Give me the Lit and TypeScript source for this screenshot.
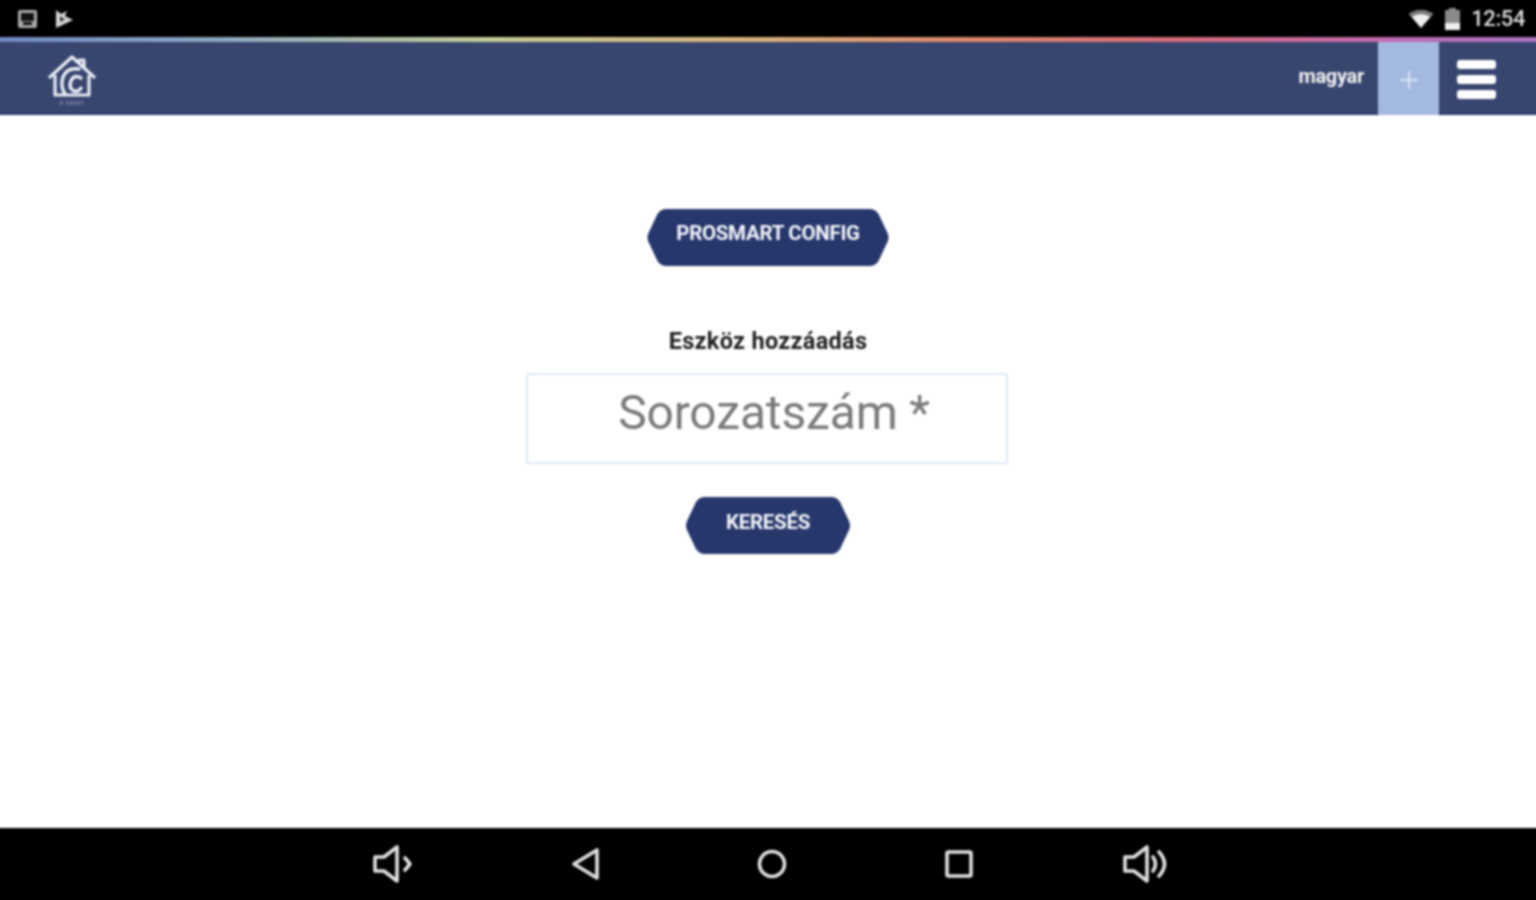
import { LitElement, html, css } from "lit";
import { customElement } from "lit/decorators.js";

@customElement("app-root")
export class AppRoot extends LitElement {
  static styles = css`
    :host { display: block; width: 1536px; height: 900px; overflow: hidden; background: #fff; font-family: "Roboto", "Liberation Sans", sans-serif; }
    .page { display: flex; flex-direction: column; width: 1552px; height: 916px; margin: -8px; filter: blur(0.85px); }
    svg { display: block; flex: none; }
    .status { height: 45px; box-sizing: border-box; background: #000; display: flex; align-items: center; padding: 8px 19px 0 25px; color: #dcdcdc; flex: none; }
    .status .left { display: flex; gap: 17px; align-items: center; }
    .status .right { margin-left: auto; display: flex; align-items: center; gap: 10px; }
    .time { font-size: 22px; font-weight: 500; letter-spacing: -0.4px; }
    .rainbow { height: 5px; flex: none; background: linear-gradient(90deg, #6f86c4 0%, #8ea8c0 15%, #c4cc96 32%, #d6b47e 48%, #dc8a6a 62%, #d56a78 76%, #c06ab0 90%, #a873c4 100%); }
    .header { height: 73px; background: #38466f; border-bottom: 2px solid #2b3a6b; box-sizing: border-box; display: flex; align-items: center; padding-left: 56px; flex: none; }
    .lang { margin-left: auto; margin-right: 14px; color: #f2f2f2; font-size: 20px; font-weight: 700; letter-spacing: -0.3px; position: relative; top: -2px; }
    .add { width: 61px; height: 73px; background: #a4b9e0; display: flex; align-items: center; justify-content: center; align-self: flex-start; }
    .menu { width: 105px; display: flex; flex-direction: column; gap: 6px; padding: 3px 0 0 18px; box-sizing: border-box; }
    .menu span { display: block; width: 39px; height: 9px; background: #fff; border-radius: 3px; }
    .main { flex: 1; display: flex; flex-direction: column; align-items: center; padding-top: 94px; background: #fff; }
    .btn { border: 0; background: #27376c; color: #f4f6fb; font-family: inherit; font-weight: 700; font-size: 20.5px; letter-spacing: -0.3px; height: 57px; padding: 0 0 10px; box-sizing: border-box; display: flex; align-items: center; justify-content: center; }
    .b1 { width: 243px; clip-path: path("M20 0 H223 Q229 0 232 5 L241 24 Q243 28.5 241 33 L232 52 Q229 57 223 57 H20 Q14 57 11 52 L2 33 Q0 28.5 2 24 L11 5 Q14 0 20 0 Z"); }
    .b2 { width: 166px; padding-bottom: 8px; clip-path: path("M20 0 H146 Q152 0 155 5 L164 24 Q166 28.5 164 33 L155 52 Q152 57 146 57 H20 Q14 57 11 52 L2 33 Q0 28.5 2 24 L11 5 Q14 0 20 0 Z"); }
    h2 { margin: 60px 0 0; font-size: 23.5px; line-height: 30px; font-weight: 700; color: #222; letter-spacing: 0.3px; }
    .field { width: 482px; height: 91px; margin: 17px 2px 33px 0; box-sizing: border-box; border: 2px solid #dfe7f6; border-radius: 2px; display: flex; justify-content: center; padding: 8px 0 0 14px; font-size: 48px; line-height: 60px; font-weight: 400; letter-spacing: -0.15px; color: #7a7a7a; background: #fff; }
    .nav { height: 80px; box-sizing: border-box; background: #000; flex: none; display: flex; align-items: center; padding: 0 0 8px 380px; }
    .nav svg { fill: none; stroke: #e0e0e0; stroke-width: 3.6; stroke-linejoin: round; stroke-linecap: round; }
    .g1 { margin-right: 157px; }
    .g2 { margin-right: 157px; }
    .g3 { margin-right: 158px; }
    .g4 { margin-right: 149px; }
  `;

  render() {
    return html`<div class="page">
      <div class="status">
        <div class="left">
          <svg width="21" height="20" viewBox="0 0 21 20"><rect x="1" y="1" width="19" height="18" rx="2" fill="#a8a8a8"/><rect x="4" y="4" width="13" height="8" fill="#111"/><rect x="6" y="13" width="9" height="3" fill="#111"/></svg>
          <svg width="19" height="20" viewBox="0 0 19 20"><path d="M1 1 L6 5 L12 2 L10 7 L18 11 L1 19Z" fill="#d4d4d4"/><path d="M5 7 L10 10.5 L5 13Z" fill="#333"/></svg>
        </div>
        <div class="right">
          <svg width="26" height="20" viewBox="0 0 26 20"><path d="M1 5 Q13 -3 25 5 L13 19Z" fill="#f0f0f0"/><path d="M1 5 Q13 -3 25 5 L22.5 8 Q13 2 3.5 8Z" fill="#777"/></svg>
          <svg width="17" height="22" viewBox="0 0 17 22"><rect x="5" y="0" width="7" height="3" fill="#8a8a8a"/><rect x="1" y="2" width="15" height="13" fill="#8a8a8a"/><rect x="1" y="15" width="15" height="7" fill="#f0f0f0"/></svg>
          <span class="time">12:54</span>
        </div>
      </div>
      <div class="rainbow"></div>
      <div class="header">
        <svg width="48" height="54" viewBox="0 0 48 54" style="margin-top:6px">
          <g fill="none" stroke="#e8ecf4" stroke-linejoin="round" stroke-linecap="round">
            <g stroke-width="3.2">
              <path d="M2 23 L24 3 L46 23"/>
              <path d="M7 22 V41 H41 V22"/>
              <path d="M31 8 V6 H36 V13"/>
            </g>
            <g stroke-width="3.4">
              <path d="M31 15 Q19 13 15 23 Q12 32 17 40"/>
              <path d="M33 24 Q26 20 23 27 Q20 34 26 37 Q31 38 33 34"/>
            </g>
          </g>
          <text x="24" y="51" text-anchor="middle" font-size="6" fill="#9aa6c4" font-family="Roboto" letter-spacing="0.8">P.SMRT</text>
        </svg>
        <span class="lang">magyar</span>
        <div class="add">
          <svg width="20" height="20" viewBox="0 0 20 20" style="margin-top:3px"><path d="M10 1 V19 M1 10 H19" stroke="#d6e2f4" stroke-width="2"/></svg>
        </div>
        <div class="menu"><span></span><span></span><span></span></div>
      </div>
      <div class="main">
        <button class="btn b1">PROSMART CONFIG</button>
        <h2>Eszköz hozzáadás</h2>
        <div class="field">Sorozatszám *</div>
        <button class="btn b2">KERESÉS</button>
      </div>
      <div class="nav">
        <svg class="g1" width="42" height="38" viewBox="0 0 42 38"><path d="M3 12 H12 L25 2 V36 L12 26 H3Z"/><path d="M33 13 L38 19 L33 25"/></svg>
        <svg class="g2" width="29" height="32" viewBox="0 0 29 32"><path d="M3 16 L26 2 V30Z"/></svg>
        <svg class="g3" width="30" height="30" viewBox="0 0 30 30"><circle cx="15" cy="15" r="12.5"/></svg>
        <svg class="g4" width="28" height="28" viewBox="0 0 28 28"><rect x="2" y="2" width="24" height="24" rx="1.5"/></svg>
        <svg width="47" height="38" viewBox="0 0 47 38"><path d="M3 12 H12 L25 2 V36 L12 26 H3Z"/><path d="M31 12 Q36 19 31 26"/><path d="M37 7 Q48 19 37 31"/></svg>
      </div>
    </div>`;
  }
}
